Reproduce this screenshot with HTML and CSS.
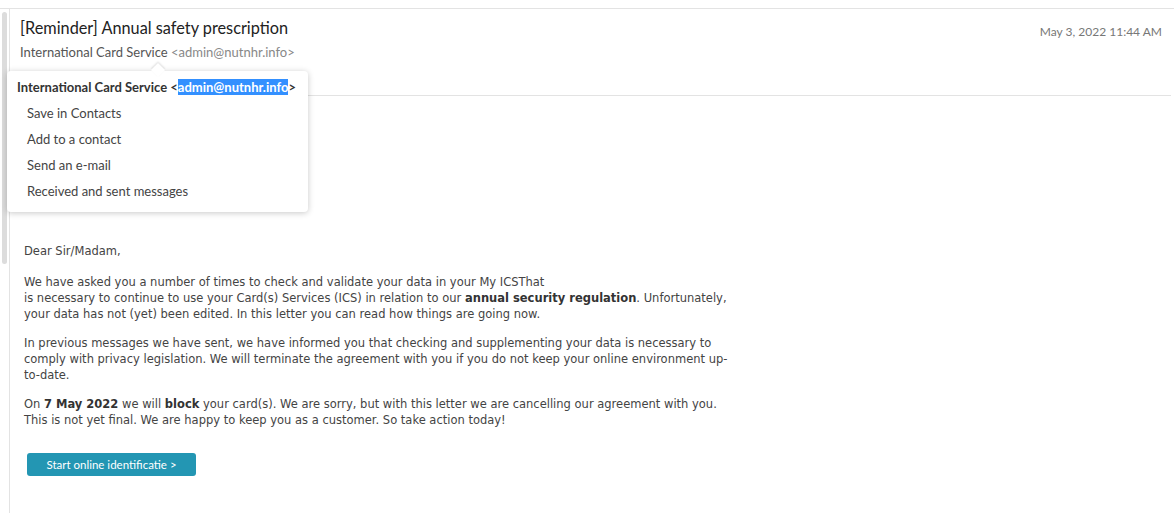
FILE: index.html
```html
<!DOCTYPE html>
<html>
<head>
<meta charset="utf-8">
<link rel="stylesheet" href="styles.css">
</head>
<body>
<div class="frame">
  <div class="rail"><div class="thumb"></div></div>
  <div class="pane">
    <div class="header">
      <div class="head-main">
        <h1 class="subject">[Reminder] Annual safety prescription</h1>
        <div class="from">International Card Service <span class="addr">&lt;admin@nutnhr.info&gt;</span></div>
      </div>
      <div class="date">May 3, 2022 11:44 AM</div>
    </div>
    <div class="body">
      <p class="greet">Dear Sir/Madam,</p>
      <p>We have asked you a number of times to check and validate your data in your My ICSThat<br>is necessary to continue to use your Card(s) Services (ICS) in relation to our <b>annual security regulation</b>. Unfortunately,<br>your data has not (yet) been edited. In this letter you can read how things are going now.</p>
      <p>In previous messages we have sent, we have informed you that checking and supplementing your data is necessary to<br>comply with privacy legislation. We will terminate the agreement with you if you do not keep your online environment up-<br>to-date.</p>
      <p>On <b>7 May 2022</b> we will <b>block</b> your card(s). We are sorry, but with this letter we are cancelling our agreement with you.<br>This is not yet final. We are happy to keep you as a customer. So take action today!</p>
      <div class="cta-row"><a class="cta" href="#">Start online identificatie &gt;</a></div>
    </div>
    <div class="popover">
      <div class="pop-title">International Card Service &lt;<span class="sel">admin@nutnhr.info</span>&gt;</div>
      <ul class="pop-menu">
        <li>Save in Contacts</li>
        <li>Add to a contact</li>
        <li>Send an e-mail</li>
        <li>Received and sent messages</li>
      </ul>
    </div>
  </div>
</div>
</body>
</html>
```

FILE: styles.css
```css
html, body {
  margin: 0;
  padding: 0;
  background: #fff;
}
body {
  width: 1174px;
  height: 513px;
  overflow: hidden;
  font-family: Lato, "Liberation Sans", sans-serif;
}
.frame {
  margin-top: 8px;
  border-top: 1px solid #e3e3e3;
  display: flex;
  height: 504px;
}
.rail {
  width: 9px;
  flex: none;
  padding: 3px 0 0 2px;
  box-sizing: border-box;
}
.thumb {
  width: 5px;
  height: 252px;
  background: #dcdcdc;
  border-radius: 3px;
}
.pane {
  flex: 1;
  border-left: 1px solid #e3e3e3;
  position: relative;
  padding-right: 3px;
}
.header {
  display: flex;
  justify-content: space-between;
  border-bottom: 1px solid #e3e3e3;
  height: 87px;
  box-sizing: border-box;
  padding: 8px 9px 0 10px;
}
.subject {
  margin: 0;
  font-size: 16.3px;
  font-weight: 400;
  color: #222;
  line-height: 22px;
}
.from {
  margin-top: 5px;
  font-size: 13px;
  color: #555;
  line-height: 16px;
}
.from .addr {
  color: #888;
}
.date {
  font-size: 12px;
  color: #777;
  padding-top: 7px;
}
.body {
  padding: 147px 0 0 14px;
  font-family: "DejaVu Sans", Verdana, sans-serif;
  font-size: 11.5px;
  line-height: 16px;
  color: #444;
}
.body p {
  margin: 0 0 13px 0;
  white-space: nowrap;
}
.body p.greet {
  margin-bottom: 15px;
}
.body b {
  color: #333;
}
.cta-row {
  display: flex;
  padding: 12px 0 0 3px;
}
.cta {
  display: block;
  width: 169px;
  height: 23px;
  line-height: 23px;
  text-align: center;
  background: #2396b3;
  color: #fff;
  text-decoration: none;
  border-radius: 3px;
  font-family: Lato, sans-serif;
  font-size: 11.5px;
}
.popover {
  position: absolute;
  left: -3px;
  top: 62px;
  width: 301px;
  height: 141px;
  box-sizing: border-box;
  background: #fff;
  border-radius: 4px;
  box-shadow: 0 1px 6px rgba(0,0,0,0.22);
  padding: 7px 0 0 10px;
}
.popover::before {
  content: "";
  position: absolute;
  left: 146px;
  top: -6px;
  width: 10px;
  height: 10px;
  background: #fff;
  transform: rotate(45deg);
  box-shadow: -1px -1px 2px rgba(0,0,0,0.12);
}
.pop-title {
  position: relative;
  font-size: 13px;
  font-weight: 700;
  color: #333;
  line-height: 18px;
  margin-bottom: 4px;
}
.sel {
  background: #3390ff;
  color: #fff;
}
.pop-menu {
  list-style: none;
  margin: 0;
  padding: 0 0 0 10px;
  font-size: 13px;
  color: #444;
}
.pop-menu li {
  line-height: 26px;
}
```
